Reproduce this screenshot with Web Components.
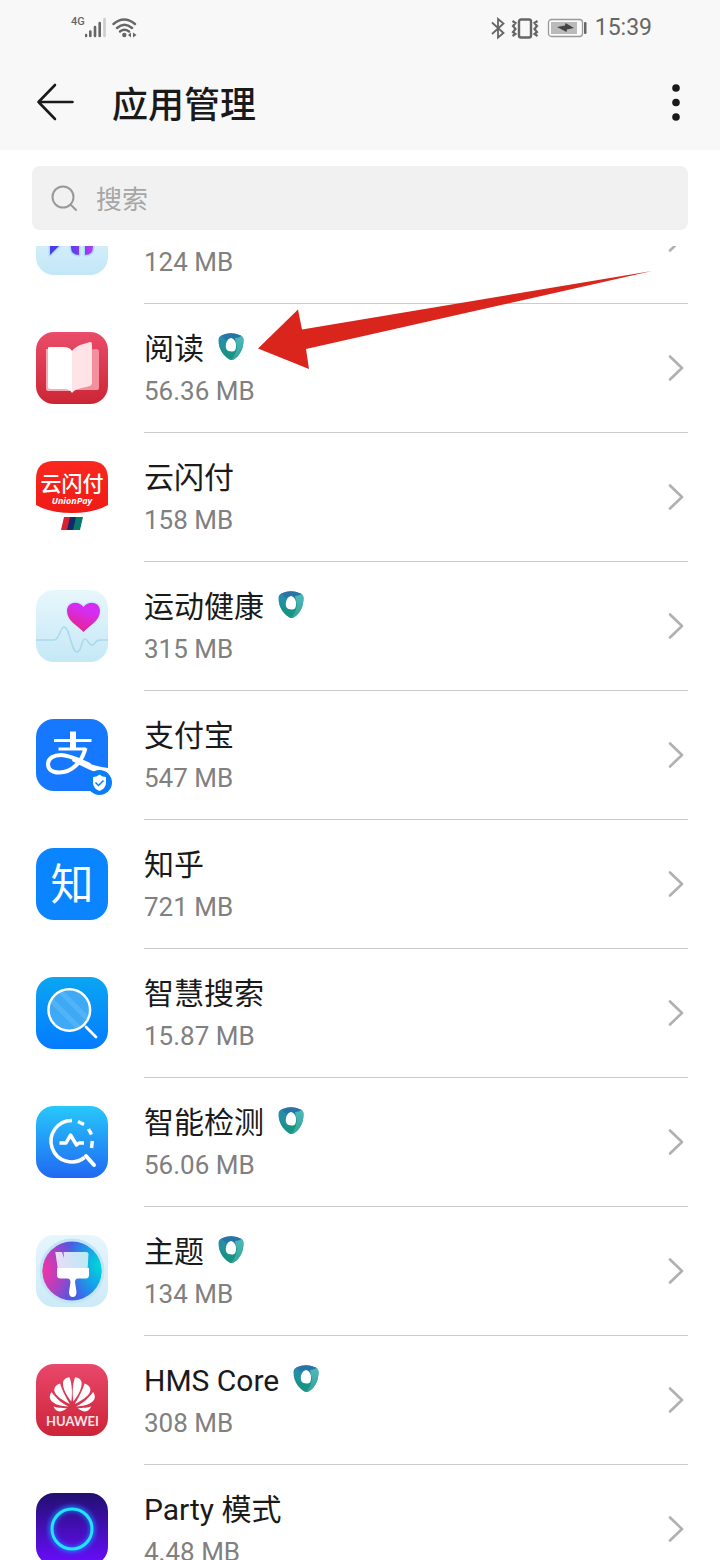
<!DOCTYPE html>
<html lang="zh-CN">
<head>
<meta charset="utf-8">
<meta name="viewport" content="width=device-width, initial-scale=1">
<title>应用管理</title>
<style>
    body {
        margin: 0;
        background: #fff;
        color: #1a1a1a;
        font-family: Roboto, "Noto Sans CJK SC", sans-serif;
    }
</style>
</head>
<body>
<app-manager>
    <status-bar slot="top">15:39</status-bar>
    <title-bar slot="top">应用管理</title-bar>
    <search-box slot="search" placeholder="搜索"></search-box>

    <app-row icon="music"><span slot="size">124 MB</span></app-row>
    <app-row icon="book" shield>阅读<span slot="size">56.36 MB</span></app-row>
    <app-row icon="unionpay">云闪付<span slot="size">158 MB</span></app-row>
    <app-row icon="health" shield>运动健康<span slot="size">315 MB</span></app-row>
    <app-row icon="alipay">支付宝<span slot="size">547 MB</span></app-row>
    <app-row icon="zhihu">知乎<span slot="size">721 MB</span></app-row>
    <app-row icon="search">智慧搜索<span slot="size">15.87 MB</span></app-row>
    <app-row icon="detect" shield>智能检测<span slot="size">56.06 MB</span></app-row>
    <app-row icon="theme" shield>主题<span slot="size">134 MB</span></app-row>
    <app-row icon="hms" shield>HMS Core<span slot="size">308 MB</span></app-row>
    <app-row icon="party">Party 模式<span slot="size">4.48 MB</span></app-row>

    <pointer-arrow slot="overlay"></pointer-arrow>
</app-manager>

<script>
// App icons, all drawn on a 72x72 grid
const tile = fill => `<rect width="72" height="72" rx="18" fill="${fill}"/>`;
const gradient = (id, from, to, dir = 'x2="0" y2="1"') => `
    <linearGradient id="${id}" x1="0" y1="0" ${dir}>
        <stop offset="0" stop-color="${from}"/><stop offset="1" stop-color="${to}"/>
    </linearGradient>`;

const petals = `
    <path d="M35.3 37.5 C30 31 26.5 24 27 18 Q28 14 33.5 13.3 C36 20 36.5 29 35.3 37.5Z"/>
    <path d="M33.8 40 C24 35 17.5 30 18.3 25 Q19 21 24 19.5 C26 26 29.5 33 33.8 40Z"/>
    <path d="M32.5 42.5 C23 42.3 14 39 13.7 33 Q13.8 30 15.5 28 C20 34 25 39 32.5 42.5Z"/>
    <path d="M31 44.3 C26 44 20 43.5 17.5 42.5 Q19.5 47.500 24.5 47.5 Q28 47 31 44.3Z"/>`;

const icons = {
    music: `<defs>${gradient('bg', '#e8f7fd', '#c3e6f6')}${gradient('p', '#5b3df0', '#b43cf0', 'x2="1" y2="0"')}</defs>
        ${tile('url(#bg)')}
        <g stroke="#a9dcf8" stroke-width="3" stroke-linejoin="round" paint-order="stroke">
            <path d="M14 20 H46 L14 52Z" fill="#4a3be6"/>
            <path d="M35 30 H43 V52 Q35 52 35 44Z M49 30 H57 V44 Q57 52 49 52Z" fill="url(#p)"/>
        </g>`,
    book: `<defs>${gradient('bg', '#ea4c69', '#cb2635')}</defs>
        ${tile('url(#bg)')}
        <path d="M10 17 H13 V57 H35 V59 H12 Q10 59 10 56Z" fill="#f7aab5"/>
        <path d="M36 20 L60 17 Q63 17 63 20 V56 Q63 58 61 58 H37Z" fill="#f3909e"/>
        <path d="M12 16 Q12 15 13 15 H27 Q34 15 36 19 V61 Q34 57 28 57 H14 Q12 57 12 55Z" fill="#fff"/>
        <path d="M36 19 Q38 16 44 13 L54 10 Q56 10 56 12 V51 Q56 53 54 54 L42 57 Q38 58 36 61Z" fill="#ffe3e6"/>`,
    unionpay: `<defs>${gradient('bg', '#fb2820', '#ee1b16')}</defs>
        <path d="M0 18 Q0 0 18 0 H54 Q72 0 72 18 V44 Q58 52 36 52 Q14 52 0 44Z" fill="url(#bg)"/>
        <text x="36" y="30" text-anchor="middle" font-size="21" font-weight="500" fill="#fff">云闪付</text>
        <text x="36" y="43" text-anchor="middle" font-family="Open Sans, sans-serif" font-size="9" font-weight="700" font-style="italic" fill="#fff">UnionPay</text>
        <path d="M28 56 H35 L32 69 H25Z" fill="#d92032"/>
        <path d="M34 56 H41 L38 69 H31Z" fill="#12296a"/>
        <path d="M40 56 H47 L44 69 H37Z" fill="#08786c"/>`,
    health: `<defs>${gradient('bg', '#e7f7fc', '#c5e8f6')}${gradient('h', '#d52ef2', '#f01c68', 'x2="0" y2="1" gradientTransform="rotate(25)"')}</defs>
        ${tile('url(#bg)')}
        <path d="M0 50 H18 C24 50 24 37 28 37 C34 37 35 62 41 62 C46 62 45 49 49 49 C52 49 52 55 56 55 C60 55 58 50 64 50 H72" fill="none" stroke="#a9d9ec" stroke-width="1.500"/>
        <path d="M47.500 42 C42 36 31 31 31 21 C31 12 42 10 47.500 17 C53 10 64 12 64 21 C64 31 53 36 47.500 42Z" fill="url(#h)" stroke="#d2eefa" stroke-width="3" paint-order="stroke"/>`,
    alipay: `${tile('#1677ff')}
        <g fill="none" stroke="#fff">
            <path d="M18 21.500 H55.500" stroke-width="3"/>
            <path d="M22.500 30 H50" stroke-width="3"/>
            <path d="M37 12.500 V30" stroke-width="6"/>
            <path d="M49.500 29 C46 43 36 53.500 23 53.500 C15 53.500 12 49.500 12 45 C12 39 18 36 25 36 C34 36 42 41 54 46" stroke-width="4"/>
        </g>
        <path d="M38 38 C46 43 58 47 72 49 V55 C72 56 71 57 70 57 C58 53 47 48 36 42Z" fill="#fff"/>
        <circle cx="63.500" cy="63.500" r="12.500" fill="#0a7df7"/>
        <path d="M63.500 55.500 Q66.500 58 70 58 V64 Q70 69 63.500 72 Q57 69 57 64 V58 Q60.500 58 63.500 55.500Z" fill="#fff"/>
        <path d="M59.500 63.500 L62.500 66.500 L67.500 61.500" fill="none" stroke="#0a7df7" stroke-width="1.500"/>`,
    zhihu: `${tile('#0a84ff')}
        <text x="36" y="52" text-anchor="middle" font-size="43" fill="#fff">知</text>`,
    search: `<defs>${gradient('bg', '#0aa6f2', '#037bff')}
            <clipPath id="lens"><circle cx="33.300" cy="33" r="19.500"/></clipPath></defs>
        ${tile('url(#bg)')}
        <g clip-path="url(#lens)">
            <rect x="12" y="12" width="44" height="44" fill="#3eaaf6"/>
            <path d="M12 20 L48 56 M22 12 L58 48" stroke="#52b3f7" stroke-width="5"/>
        </g>
        <circle cx="33.300" cy="33" r="20.800" fill="none" stroke="#fff" stroke-width="2.500"/>
        <path d="M50 50 L60 60" stroke="#fff" stroke-width="2.800" stroke-linecap="round"/>`,
    detect: `<defs>${gradient('bg', '#27c8fb', '#2068f3')}</defs>
        ${tile('url(#bg)')}
        <g fill="none" stroke="#fff" stroke-width="3.500" stroke-linejoin="round">
            <path d="M36 14.500 A20.700 20.700 0 1 0 48.500 51.500"/>
            <path d="M42 15.500 L48 18.500 M52.500 23 L55.500 28.500 M56.300 35 L55.500 42"/>
            <path d="M50 50 L58 59" stroke-width="4" stroke-linecap="round"/>
            <path d="M23.500 37 H30 L34.500 29 L40.500 39 L43 37 H48" stroke-width="3.500"/>
        </g>`,
    theme: `<defs>${gradient('bg', '#e6f6fc', '#cdeaf7')}
            ${gradient('b', '#eadcf8', '#b9eaf5', 'x2="1" y2="0"')}
            <radialGradient id="pink" cx="0" cy=".5" r=".6"><stop offset="0" stop-color="#ff31a0"/><stop offset="1" stop-color="#ff31a0" stop-opacity="0"/></radialGradient>
            <radialGradient id="cyan" cx="1" cy=".4" r=".65"><stop offset="0" stop-color="#00dcd4"/><stop offset="1" stop-color="#00c8e0" stop-opacity="0"/></radialGradient>
            <linearGradient id="mid"><stop offset="0" stop-color="#b03fc4"/><stop offset=".5" stop-color="#5058e0"/><stop offset="1" stop-color="#1488ff"/></linearGradient></defs>
        ${tile('url(#bg)')}
        <circle cx="36" cy="36" r="32.500" fill="#c2e4f6"/>
        <circle cx="36" cy="36" r="29.500" fill="url(#mid)"/>
        <circle cx="36" cy="36" r="29.500" fill="url(#pink)" opacity=".8"/>
        <circle cx="36" cy="36" r="29.500" fill="url(#cyan)"/>
        <path d="M19.300 17 H26 L28 23 L27.500 17 H50 Q52.500 17 52.500 19 L51.700 33 H21.700Z" fill="url(#b)"/>
        <path d="M21 33 H53 V40 Q53 43.500 49.500 43.500 H41 Q39 44 39 47 L40.500 57 Q40.500 62 36.700 62 Q33 62 33 57 L34.500 47 Q34.500 44 32 43.500 H24.500 Q21 43.500 21 40Z" fill="#fff"/>`,
    hms: `<defs>${gradient('bg', '#e9486b', '#cc2438')}</defs>
        ${tile('url(#bg)')}
        <g fill="#fff">${petals}<g transform="translate(72.600) scale(-1 1)">${petals}</g></g>
        <text x="36.500" y="62" text-anchor="middle" font-family="Lato, sans-serif" font-size="13" font-weight="700" fill="#fbe3e6">HUAWEI</text>`,
    party: `<defs>${gradient('bg', '#21106f', '#6a0cff')}
            <filter id="glow" x="-30%" y="-30%" width="160%" height="160%"><feGaussianBlur stdDeviation="2.500"/></filter></defs>
        ${tile('url(#bg)')}
        <circle cx="36" cy="36" r="20.500" fill="none" stroke="#1b7dff" stroke-width="5" filter="url(#glow)"/>
        <circle cx="36" cy="36" r="20" fill="none" stroke="#22e6ff" stroke-width="3"/>`
};

function attach(el, html) {
    const template = document.createElement('template');
    template.innerHTML = html;
    const shadow = el.attachShadow({ mode: 'open' });
    shadow.appendChild(template.content.cloneNode(true));
    return shadow;
}


// Page frame: fixed header and search, scrolling list
class AppManager extends HTMLElement {
    constructor() {
        super();
        const shadow = attach(this, `
            <style>
                :host { display: flex; flex-direction: column; height: 100vh; position: relative; overflow: hidden; }
                header { background: #f8f8f8; }
                .search { padding: 16px 32px; }
                main { flex: 1; min-height: 0; overflow-y: auto; scrollbar-width: none; }
            </style>
            <header><slot name="top"></slot></header>
            <div class="search"><slot name="search"></slot></div>
            <main><slot></slot></main>
            <slot name="overlay"></slot>
        `);
        this.list = shadow.querySelector('main');
    }

    connectedCallback() {
        // The list opens slightly scrolled
        requestAnimationFrame(() => { this.list.scrollTop = 71; });
    }
}

class StatusBar extends HTMLElement {
    constructor() {
        super();
        attach(this, `
            <style>
                :host { display: flex; justify-content: space-between; align-items: center; height: 56px; padding: 0 68px 0 71px; color: #666; font-size: 23px; line-height: 28px; }
                div { display: flex; align-items: center; }
                .net { font-size: 11px; font-weight: 500; line-height: 12px; align-self: flex-start; }
                .right { gap: 8px; }
                svg { display: block; }
            </style>
            <div>
                <span class="net">4G</span>
                <svg width="54" height="24" viewBox="0 0 54 24" fill="none" stroke="#666" stroke-linecap="round">
                    <g stroke-width="2.600">
                        <path d="M1 19 V20 M5.300 15.500 V20 M10 11 V20 M14.700 7 V20"/>
                        <path d="M19.500 3 V20" stroke="#ccc"/>
                    </g>
                    <g stroke-width="2.400">
                        <path d="M28.500 8 Q39 -1 50 8 M32 12 Q39.500 5.500 47 12 M35 15.500 Q39.500 12 44 15.500"/>
                    </g>
                    <circle cx="39.300" cy="19" r="2.200" fill="#666" stroke="none"/>
                    <path d="M43 19 L46 16.500 V21.500Z M48 16.500 L51.500 19 L48 21.500Z" fill="#666" stroke="none"/>
                </svg>
            </div>
            <div class="right">
                <svg width="48" height="24" viewBox="0 0 48 24" fill="none" stroke="#666">
                    <path d="M1 6.500 L12.500 17 L7 21.500 V3 L12.500 7.500 L1 18" stroke-width="1.800"/>
                    <rect x="28" y="3.500" width="12" height="18" rx="2" stroke-width="2.400"/>
                    <path d="M21.500 5 L24.500 7 L22 10 L24.500 13 L22 16 L24.500 18 L21.500 20 M46.500 5 L43.500 7 L46 10 L43.500 13 L46 16 L43.500 18 L46.500 20" stroke-width="2.200"/>
                </svg>
                <svg width="40" height="20" viewBox="0 0 40 20">
                    <rect x="1.500" y="1.500" width="34" height="17" rx="3" fill="#fbfbfb" stroke="#999" stroke-width="1.300"/>
                    <rect x="4" y="4" width="26" height="12" fill="#bbb"/>
                    <path d="M10 9 L18 7.500 L18.500 5 L27 10 L20 11.500 L19.500 14Z" fill="#444"/>
                    <rect x="37" y="4" width="2.500" height="12" rx="1" fill="#666"/>
                </svg>
                <slot></slot>
            </div>
        `);
    }
}

class TitleBar extends HTMLElement {
    constructor() {
        super();
        attach(this, `
            <style>
                :host { display: flex; align-items: center; height: 94px; padding: 0 32px; gap: 32px; }
                button { display: flex; justify-content: center; width: 48px; padding: 0; border: 0; background: none; }
                h1 { flex: 1; margin: 0; padding-top: 6px; font-size: 36px; line-height: 48px; font-weight: 500; }
                .more { width: 24px; }
            </style>
            <button aria-label="返回">
                <svg width="40" height="40" viewBox="0 0 40 40" fill="none" stroke="#1a1a1a" stroke-width="2.600" stroke-linecap="round" stroke-linejoin="round">
                    <path d="M36.500 19 H2.500 M19 2 L2.500 19 L19 36"/>
                </svg>
            </button>
            <h1><slot></slot></h1>
            <button class="more" aria-label="更多">
                <svg width="8" height="38" viewBox="0 0 8 38" fill="#1a1a1a">
                    <circle cx="4" cy="4" r="3.800"/><circle cx="4" cy="18.500" r="3.800"/><circle cx="4" cy="33" r="3.800"/>
                </svg>
            </button>
        `);
    }
}

class SearchBox extends HTMLElement {
    constructor() {
        super();
        const shadow = attach(this, `
            <style>
                :host { display: block; }
                label { display: flex; align-items: center; gap: 18px; height: 64px; padding: 0 18px; border-radius: 8px; background: #f1f1f1; }
                input { flex: 1; min-width: 0; padding: 4px 0 0; border: 0; outline: 0; background: none; font: inherit; font-size: 26px; line-height: 36px; color: #1a1a1a; }
                input::placeholder { color: #a6a6a6; opacity: 1; }
            </style>
            <label>
                <svg width="28" height="28" viewBox="0 0 28 28" fill="none" stroke="#999" stroke-width="2" stroke-linecap="round">
                    <circle cx="13" cy="13" r="10.500"/><path d="M21 21 L26 26"/>
                </svg>
                <input type="text">
            </label>
        `);
        const input = shadow.querySelector('input');
        input.placeholder = this.getAttribute('placeholder');
        input.setAttribute('aria-label', input.placeholder);
    }
}

class AppIcon extends HTMLElement {
    constructor() {
        super();
        this.attachShadow({ mode: 'open' });
    }

    connectedCallback() {
        this.shadowRoot.innerHTML = `
            <style>
                :host { display: block; width: 72px; height: 72px; }
                svg { display: block; overflow: visible; }
            </style>
            <svg width="72" height="72" viewBox="0 0 72 72" aria-hidden="true">${icons[this.getAttribute('name')]}</svg>
        `;
    }
}

class ShieldBadge extends HTMLElement {
    constructor() {
        super();
        attach(this, `
            <style>
                :host { display: block; padding-bottom: 4px; }
                svg { display: block; }
            </style>
            <svg width="26" height="28" viewBox="0 0 26 28" aria-hidden="true">
                <defs>
                    <linearGradient id="l" x1="0" y1="0" x2="0.400" y2="1"><stop offset="0" stop-color="#2a88b0"/><stop offset="1" stop-color="#1b9c88"/></linearGradient>
                    <linearGradient id="r" x1="0" y1="0" x2="0" y2="1"><stop offset="0" stop-color="#4fb9bd"/><stop offset="1" stop-color="#35a494"/></linearGradient>
                    <clipPath id="shape"><path d="M.5 7 Q.5 3.500 4 2.200 Q13 -1.500 22 2.200 Q25.500 3.500 25.500 7 C25.500 16 22 22.500 16 26.200 Q13.500 27.800 11 26.200 C4.500 22 .5 15 .5 7Z"/></clipPath>
                </defs>
                <g clip-path="url(#shape)">
                    <rect width="26" height="28" fill="url(#l)"/>
                    <path d="M2 1 L13 -1 L24 2 V5 L18 8 Q13 3 8 7Z" fill="#2874a6"/>
                    <path d="M17 5 Q22 5 24 2 L26 4 V28 H11 Q18 22 19 14Z" fill="url(#r)"/>
                    <path d="M0 10 Q5 20 18 17.500 Q17 24 12 28 H4Z" fill="#168f7e" opacity=".6"/>
                </g>
                <path d="M13 5 C17 6 18.500 10 18 14 Q17.500 18 15.500 18.300 Q13 18.800 10.500 18 Q7.800 17 7.800 13 C7.800 9 9.500 6 13 5Z" fill="#fff"/>
            </svg>
        `);
    }
}

class AppRow extends HTMLElement {
    constructor() {
        super();
        attach(this, `
            <style>
                :host { display: block; }
                a { display: flex; align-items: center; gap: 36px; padding: 0 32px 0 36px; color: inherit; text-decoration: none; }
                app-icon { margin-bottom: 2px; }
                .body { flex: 1; display: flex; align-items: center; justify-content: space-between; height: 128px; padding-right: 4px; border-bottom: 1px solid #ccc; }
                .text { padding-top: 4px; }
                .name { display: flex; align-items: center; gap: 14px; height: 42px; font-size: 30px; line-height: 42px; }
                .size { font-size: 26px; line-height: 42px; color: #808080; }
                .chevron { flex: none; }
            </style>
            <a href="#">
                <app-icon name="${this.getAttribute('icon')}"></app-icon>
                <div class="body">
                    <div class="text">
                        <div class="name"><span><slot></slot></span>${this.hasAttribute('shield') ? '<shield-badge></shield-badge>' : ''}</div>
                        <div class="size"><slot name="size"></slot></div>
                    </div>
                    <svg class="chevron" width="16" height="28" viewBox="0 0 16 28" fill="none" stroke="#b0b0b0" stroke-width="2.600" stroke-linecap="round" stroke-linejoin="round">
                        <path d="M2 2.500 L14 14 L2 25.500"/>
                    </svg>
                </div>
            </a>
        `);
    }
}

// Red arrow laid over the list
class PointerArrow extends HTMLElement {
    constructor() {
        super();
        attach(this, `
            <style>
                :host { display: block; position: absolute; left: 258px; top: 271px; pointer-events: none; }
                svg { display: block; }
            </style>
            <svg width="394" height="98" viewBox="0 0 394 98" aria-hidden="true">
                <path d="M0 77.500 L40 38.500 L44 58.500 L394 0 L48 78 L51 98Z" fill="#da251d"/>
            </svg>
        `);
    }
}

customElements.define('app-icon', AppIcon);
customElements.define('shield-badge', ShieldBadge);
customElements.define('status-bar', StatusBar);
customElements.define('title-bar', TitleBar);
customElements.define('search-box', SearchBox);
customElements.define('app-row', AppRow);
customElements.define('pointer-arrow', PointerArrow);
customElements.define('app-manager', AppManager);
</script>
</body>
</html>
